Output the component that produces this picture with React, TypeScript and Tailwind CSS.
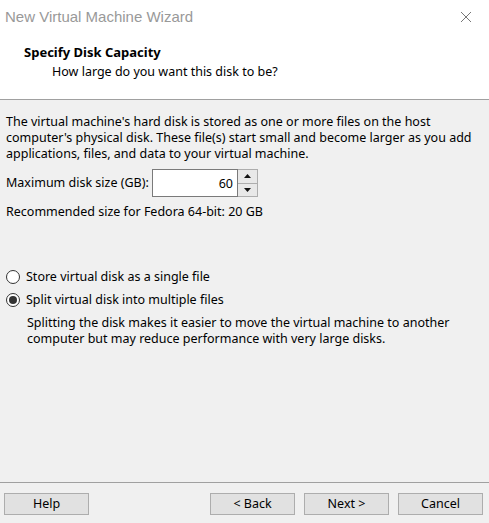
import { useState } from "react";

const Radio = ({ checked }: { checked: boolean }) => (
  <span className="w-[14px] h-[14px] rounded-full border border-[#333] bg-white flex items-center justify-center shrink-0">
    {checked && <span className="w-[8px] h-[8px] rounded-full bg-[#333]" />}
  </span>
);

const WinButton = ({ label }: { label: string }) => (
  <button className="w-[85px] h-[22px] border border-[#adadad] bg-[#e1e1e1] text-[12.5px] text-black leading-none">
    {label}
  </button>
);

const App = () => {
  const [size, setSize] = useState(60);
  const [split, setSplit] = useState(true);

  return (
    <div className="w-[489px] h-[523px] bg-[#f0f0f0] flex flex-col text-[12.5px] text-black font-['Segoe_UI','Noto_Sans',sans-serif] overflow-hidden">
      {/* title + header */}
      <div className="h-[100px] bg-white border-b border-[#a0a0a0] shrink-0">
        <div className="h-[34px] flex items-center justify-between pl-[5px] pr-[17px]">
          <span className="text-[15px] text-[#999] font-['Liberation_Sans',sans-serif]">New Virtual Machine Wizard</span>
          <svg width="12" height="12" viewBox="0 0 12 12">
            <path d="M1 1 L11 11 M11 1 L1 11" stroke="#777" strokeWidth="1" fill="none" />
          </svg>
        </div>
        <div className="pl-[24px] pt-[10px] font-bold leading-4 text-[13px]">Specify Disk Capacity</div>
        <div className="pl-[52px] pt-[4px] leading-4">How large do you want this disk to be?</div>
      </div>

      {/* body */}
      <div className="px-[6px] pt-[14px]">
        <p className="leading-4 whitespace-nowrap">
          The virtual machine's hard disk is stored as one or more files on the host
          <br />
          computer's physical disk. These file(s) start small and become larger as you add
          <br />
          applications, files, and data to your virtual machine.
        </p>
        <div className="mt-[7px] h-[28px] flex items-center">
          <span className="w-[146px]">Maximum disk size (GB):</span>
          <div className="flex items-center h-[28px]">
            <input
              value={size}
              onChange={(e) => setSize(Number(e.target.value) || 0)}
              className="w-[86px] h-[28px] border border-[#7a7a7a] bg-white text-right pr-[4px] text-[12.5px] outline-none"
            />
            <div className="flex flex-col h-[28px] w-[20px] border border-[#adadad] border-l-0">
              <button onClick={() => setSize(size + 1)} className="flex-1 bg-[#e8e8e8] border-b border-[#adadad] flex items-center justify-center">
                <svg width="7" height="4" viewBox="0 0 7 4"><path d="M3.5 0 L7 4 L0 4 Z" fill="#111" /></svg>
              </button>
              <button onClick={() => setSize(size - 1)} className="flex-1 bg-[#e8e8e8] flex items-center justify-center">
                <svg width="7" height="4" viewBox="0 0 7 4"><path d="M0 0 L7 0 L3.5 4 Z" fill="#111" /></svg>
              </button>
            </div>
          </div>
        </div>
        <div className="mt-[7px] leading-4">Recommended size for Fedora 64-bit: 20 GB</div>

        <div className="mt-[49px] flex flex-col gap-[7px]">
          <label className="flex items-center gap-[6px] leading-4" onClick={() => setSplit(false)}>
            <Radio checked={!split} />
            <span>Store virtual disk as a single file</span>
          </label>
          <label className="flex items-center gap-[6px] leading-4" onClick={() => setSplit(true)}>
            <Radio checked={split} />
            <span>Split virtual disk into multiple files</span>
          </label>
        </div>
        <p className="mt-[7px] pl-[21px] leading-4 whitespace-nowrap">
          Splitting the disk makes it easier to move the virtual machine to another
          <br />
          computer but may reduce performance with very large disks.
        </p>
      </div>

      {/* footer */}
      <div className="mt-auto border-t border-[#a0a0a0] pt-[10px] pb-[8px] px-[4px] flex items-center">
        <WinButton label="Help" />
        <div className="ml-auto flex gap-[9px] pr-[2px]">
          <WinButton label="< Back" />
          <WinButton label="Next >" />
          <WinButton label="Cancel" />
        </div>
      </div>
    </div>
  );
};

export default App;
